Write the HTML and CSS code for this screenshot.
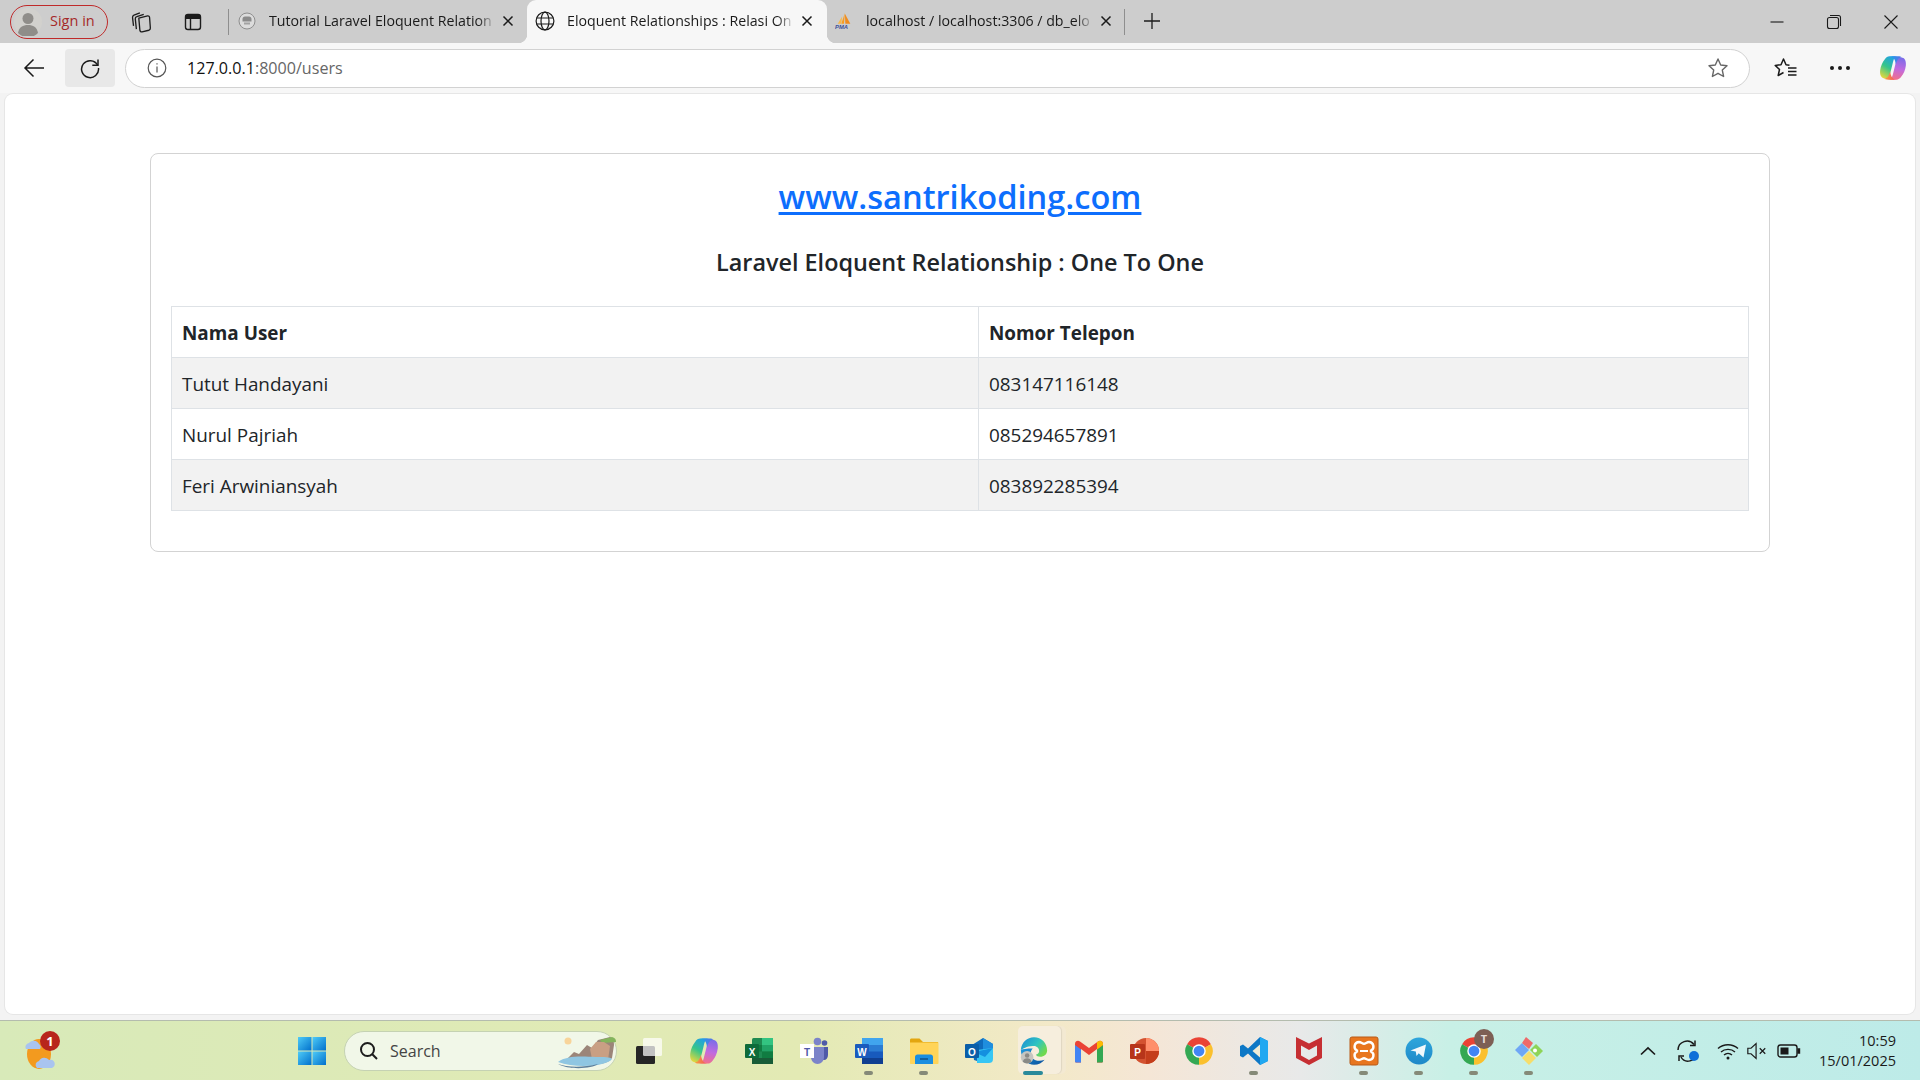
FILE: index.html
```html
<!DOCTYPE html>
<html lang="en">
<head>
<meta charset="utf-8">
<title>Eloquent Relationships</title>
<link rel="stylesheet" href="styles.css">
</head>
<body>
<svg class="sprite" aria-hidden="true">
  <defs>
    <linearGradient id="cpA" x1="0.7" y1="0" x2="0.2" y2="1"><stop offset="0" stop-color="#1f9fe8"/><stop offset=".5" stop-color="#35c58a"/><stop offset="1" stop-color="#e8d83c"/></linearGradient>
    <linearGradient id="cpB" x1="0.6" y1="0" x2="0.4" y2="1"><stop offset="0" stop-color="#7c6ce8"/><stop offset=".5" stop-color="#c06ae0"/><stop offset="1" stop-color="#f2708a"/></linearGradient>
    <linearGradient id="cpC" x1="0" y1="0" x2="1" y2="0"><stop offset="0" stop-color="#1f9fe8"/><stop offset="1" stop-color="#5a70e8"/></linearGradient>
    <linearGradient id="cpD" x1="0" y1="0" x2="1" y2="0"><stop offset="0" stop-color="#f7a53c"/><stop offset="1" stop-color="#ef4f5c"/></linearGradient>
    <linearGradient id="edA" x1="0" y1="0" x2="1" y2=".6"><stop offset="0" stop-color="#1b8ad6"/><stop offset=".6" stop-color="#2fc5c0"/><stop offset="1" stop-color="#6fd94f"/></linearGradient>
    <linearGradient id="edB" x1="0" y1="0" x2="1" y2="1"><stop offset="0" stop-color="#1e9be0"/><stop offset="1" stop-color="#0c4f9c"/></linearGradient>
    <linearGradient id="tgA" x1="0" y1="0" x2="0" y2="1"><stop offset="0" stop-color="#2ea6dc"/><stop offset="1" stop-color="#1e88c8"/></linearGradient>
    <linearGradient id="wnA" x1="0" y1="0" x2="1" y2="1"><stop offset="0" stop-color="#4fcbf7"/><stop offset="1" stop-color="#0070cc"/></linearGradient>
    <symbol id="copilot" viewBox="0 0 24 24">
      <path d="M9 2h7c-3 0-3.500 3-4.500 7L10 15c-1 4-2 6-5 6-3 0-4.500-3-4-7 .5-4 2-7 4-9.500C6 3 7.500 2 9 2z" fill="url(#cpA)"/>
      <path d="M15 22H8c3 0 3.500-3 4.500-7L14 9c1-4 2-6 5-6 3 0 4.500 3 4 7-.5 4-2 7-4 9.500-1 1.500-2.500 2.500-4 2.500z" fill="url(#cpB)"/>
      <path d="M9 2h7c2 0 3 .4 3.500 1-2.500 0-4 2-5 6-.5-3-1.500-7-5.500-7z" fill="url(#cpC)"/>
      <path d="M15 22H8c-2 0-3-.4-3.500-1 2.500 0 4-2 5-6 .5 3 1.500 7 5.500 7z" fill="url(#cpD)"/>
    </symbol>
    <symbol id="chrome" viewBox="0 0 24 24">
      <path d="M12 12L2.470 6.500A11 11 0 0 1 21.530 6.500Z" fill="#ea4335"/>
      <path d="M12 12L21.530 6.500A11 11 0 0 1 12 23Z" fill="#fbc02d"/>
      <path d="M12 12L12 23A11 11 0 0 1 2.470 6.500Z" fill="#34a853"/>
      <circle cx="12" cy="12" r="5.400" fill="#fff"/><circle cx="12" cy="12" r="4.300" fill="#4285f4"/>
    </symbol>
  </defs>
</svg>

<div class="strip">
  <div class="signin">
    <svg class="avatar" viewBox="0 0 28 28"><circle cx="14" cy="14" r="14" fill="#d2d1cd"/><circle cx="14" cy="10.500" r="5.500" fill="#8f8d89"/><path d="M4 25c1-6 5-8 10-8s9 2 10 8a14 14 0 0 1-20 0z" fill="#8f8d89"/></svg>
    <span>Sign in</span>
  </div>
  <div class="strip-btn">
    <svg class="ico22" viewBox="0 0 20 20" fill="none" stroke="#1c1c1c" stroke-width="1.200" stroke-linejoin="round"><path d="M8 6.500L16 4.500c1-.2 1.700.4 1.800 1.400L18.500 15.500c.1 1-.4 1.700-1.400 2L11 19c-1 .2-1.800-.3-2-1.300z"/><path d="M5.800 16.500L4.800 7.200c-.1-1 .4-1.800 1.400-2.100L12.500 3"/><path d="M3.200 13.500L2.300 6c-.1-1 .4-1.800 1.300-2.200L9 1.800"/></svg>
  </div>
  <div class="strip-btn">
    <svg class="ico20" viewBox="0 0 20 20"><rect x="2.500" y="2.500" width="15" height="15" rx="2.500" fill="none" stroke="#1c1c1c" stroke-width="1.400"/><path d="M3 3h14v4H3z" fill="#1c1c1c"/><path d="M7.500 7v10" stroke="#1c1c1c" stroke-width="1.400"/></svg>
  </div>
  <div class="divider first"></div>
  <div class="tab tab-one">
    <svg class="favicon" viewBox="0 0 18 18"><circle cx="9" cy="9" r="8" fill="#dcdcdc" stroke="#8e8e8e"/><path d="M4.500 7c0-1.500 1-2.500 2.500-2.500h4c1.500 0 2.500 1 2.500 2.500v2.500h-9z" fill="#8b8b8b"/><path d="M6 10.500h6v2H6z" fill="#a2a2a2"/></svg>
    <span class="tab-title">Tutorial Laravel Eloquent Relation</span>
    <svg class="close" viewBox="0 0 16 16"><path d="M3.500 3.500l9 9M12.500 3.500l-9 9" stroke="#1a1a1a" stroke-width="1.500"/></svg>
  </div>
  <div class="tab tab-active">
    <svg class="globe" viewBox="0 0 20 20" fill="none" stroke="#1a1a1a" stroke-width="1.200"><circle cx="10" cy="10" r="8.900"/><ellipse cx="10" cy="10" rx="4" ry="8.900"/><path d="M1.800 7h16.400M1.800 13h16.400"/></svg>
    <span class="tab-title">Eloquent Relationships : Relasi On</span>
    <svg class="close" viewBox="0 0 16 16"><path d="M3.500 3.500l9 9M12.500 3.500l-9 9" stroke="#1a1a1a" stroke-width="1.500"/></svg>
  </div>
  <div class="tab tab-three">
    <svg class="favicon" viewBox="0 0 20 20"><path d="M7 13L11 1l-1 12z" fill="#f89c20"/><path d="M3 13l5-8-1 8z" fill="#f7b84b"/><path d="M11.500 13L11 2l6 11z" fill="#f08c1e"/><text class="pma" x="0" y="19">PMA</text></svg>
    <span class="tab-title">localhost / localhost:3306 / db_elo</span>
    <svg class="close" viewBox="0 0 16 16"><path d="M3.500 3.500l9 9M12.500 3.500l-9 9" stroke="#1a1a1a" stroke-width="1.500"/></svg>
  </div>
  <div class="divider"></div>
  <div class="new-tab">
    <svg class="ico20" viewBox="0 0 20 20"><path d="M10 2v16M2 10h16" stroke="#1c1c1c" stroke-width="1.300"/></svg>
  </div>
  <div class="win-controls">
    <svg class="win-btn" viewBox="0 0 16 16"><path d="M1.500 8h13" stroke="#1a1a1a" stroke-width="1.100"/></svg>
    <svg class="win-btn" viewBox="0 0 16 16" fill="none" stroke="#1a1a1a" stroke-width="1.100"><rect x="1.500" y="3.500" width="11" height="11" rx="2"/><path d="M4 1.500h8.500c1 0 2 1 2 2V12"/></svg>
    <svg class="win-btn" viewBox="0 0 16 16"><path d="M1.500 1.500l13 13M14.500 1.500l-13 13" stroke="#1a1a1a" stroke-width="1.100"/></svg>
  </div>
</div>

<div class="toolbar">
  <div class="tool back">
    <svg class="ico22" viewBox="0 0 22 22" fill="none" stroke="#1a1a1a" stroke-width="1.500"><path d="M21 11H2M10.500 2.500L2 11l8.500 8.500"/></svg>
  </div>
  <div class="tool reload">
    <svg class="ico22" viewBox="0 0 22 22" fill="none" stroke="#1a1a1a" stroke-width="1.500"><path d="M18.500 8A8.500 8.500 0 1 0 19.500 11"/><path d="M19 2.500V8.200h-5.700"/></svg>
  </div>
  <div class="address">
    <svg class="info" viewBox="0 0 20 20" fill="none" stroke="#555" stroke-width="1.200"><circle cx="10" cy="10" r="8.800"/><path d="M10 8.500v6"/><path d="M10 5.200v1.400"/></svg>
    <span class="url"><span class="url-host">127.0.0.1</span>:8000/users</span>
    <svg class="addr-star" viewBox="0 0 22 22" fill="none" stroke="#666" stroke-width="1.400"><path d="M11 2l2.700 6 6.300.7-4.700 4.400 1.300 6.400-5.600-3.200-5.600 3.200 1.300-6.400L2 8.700 8.300 8z" stroke-linejoin="round"/></svg>
  </div>
  <div class="tool favs">
    <svg class="ico24" viewBox="0 0 24 24" fill="none" stroke="#1a1a1a" stroke-width="1.500" stroke-linejoin="round"><path d="M15.500 9.200L12 8.700 9.500 3 7 8.700l-5.800.7 4.300 4.100-1.300 6 5.300-3"/><path d="M14 12h8.500M14 15.500h8.500M14 19h8.500" stroke-width="1.400"/></svg>
  </div>
  <div class="tool dots">
    <span class="dot"></span><span class="dot"></span><span class="dot"></span>
  </div>
  <div class="tool cp">
    <svg class="ico28" viewBox="0 0 24 24"><use href="#copilot"/></svg>
  </div>
</div>

<div class="viewport">
  <main class="page">
    <section class="card">
      <h3 class="site"><a href="#">www.santrikoding.com</a></h3>
      <h5 class="subtitle">Laravel Eloquent Relationship : One To One</h5>
      <table class="users">
        <colgroup><col class="col-a"><col class="col-b"></colgroup>
        <thead><tr><th>Nama User</th><th>Nomor Telepon</th></tr></thead>
        <tbody>
          <tr><td>Tutut Handayani</td><td>083147116148</td></tr>
          <tr><td>Nurul Pajriah</td><td>085294657891</td></tr>
          <tr><td>Feri Arwiniansyah</td><td>083892285394</td></tr>
        </tbody>
      </table>
    </section>
  </main>
</div>

<footer class="taskbar">
  <div class="weather">
    <svg class="weather-ico" viewBox="0 0 36 36">
      <ellipse cx="16" cy="19" rx="12" ry="15" fill="#f39a1f"/>
      <path d="M3 14a4 4 0 0 1 3-6 6 6 0 0 1 10 1 3.500 3.500 0 0 1 1 5z" fill="#a9c4ef"/>
      <path d="M14 33a4 4 0 0 1 2-7 6 6 0 0 1 10-1 4 4 0 0 1 3 8z" fill="#a9c4ef"/>
    </svg>
    <span class="badge-red">1</span>
  </div>
  <div class="start">
    <svg class="ico30" viewBox="0 0 30 30"><rect x="1" y="1" width="13.500" height="13.500" fill="url(#wnA)"/><rect x="15.500" y="1" width="13.500" height="13.500" fill="url(#wnA)"/><rect x="1" y="15.500" width="13.500" height="13.500" fill="url(#wnA)"/><rect x="15.500" y="15.500" width="13.500" height="13.500" fill="url(#wnA)"/></svg>
  </div>
  <div class="search">
    <svg class="search-ico" viewBox="0 0 20 20" fill="none" stroke="#1c1c1c" stroke-width="2"><circle cx="8.500" cy="8.500" r="6.500"/><path d="M13.300 13.300L18 18"/></svg>
    <span class="search-text">Search</span>
    <svg class="scene" viewBox="0 0 60 36">
      <circle cx="12" cy="8" r="3.500" fill="#f8d49a"/>
      <path d="M10 27l8-8 5 2 8-9 5 3 6-8 12-3c3 1 4 3 4 8l-2 13c-4 8-30 9-41 2z" fill="#9b8579"/>
      <path d="M44 7l12-3c3 1 4 2 4 5l-14 1z" fill="#83b45c"/>
      <path d="M34 16l6-7 8 0 6 4-2 14-16-1z" fill="#c99f84"/>
      <path d="M2 29c8-6 20-6 38-5 8 0 14 0 16 2-4 7-36 10-54 3z" fill="#8fc6e2"/>
      <path d="M2 31c8 3 24 4 40 0-6 5-30 6-40 0z" fill="#5c7f9c"/>
    </svg>
  </div>
  <nav class="apps">
    <div class="app">
      <svg class="ico30" viewBox="0 0 30 30"><rect x="2" y="10" width="19" height="18" rx="1.500" fill="#262626"/><rect x="9" y="2" width="19" height="18" rx="1.500" fill="#fff" fill-opacity=".72"/></svg>
    </div>
    <div class="app">
      <svg class="ico30" viewBox="0 0 24 24"><use href="#copilot"/></svg>
    </div>
    <div class="app">
      <svg class="ico30" viewBox="0 0 30 30"><rect x="8" y="2" width="21" height="26" rx="1.500" fill="#1f8a52"/><rect x="18" y="2" width="11" height="7" fill="#33c481"/><rect x="18" y="9" width="11" height="6.500" fill="#21a366"/><rect x="18" y="15.500" width="11" height="6.500" fill="#107c41"/><rect x="8" y="9" width="10" height="6.500" fill="#107c41"/><rect x="8" y="22" width="21" height="6" fill="#185c37"/><rect x="1" y="8" width="14" height="14" rx="1" fill="#0e6b3a"/><text class="logo-letter" x="8" y="19.500">X</text></svg>
    </div>
    <div class="app">
      <svg class="ico30" viewBox="0 0 30 30"><circle cx="18.500" cy="5.500" r="3.800" fill="#7b83c9"/><circle cx="25.500" cy="7" r="2.800" fill="#4f5aa8"/><path d="M21 11h8v8c0 3-2 5-4 5-2.500 0-4-2-4-5z" fill="#4f5aa8"/><path d="M12 11h13v10c0 4-3 7-6.500 7S12 25 12 21z" fill="#7b83c9"/><rect x="1" y="8" width="14" height="14" fill="#fff"/><text class="logo-letter teams" x="8" y="19.500">T</text></svg>
    </div>
    <div class="app dotted">
      <svg class="ico30" viewBox="0 0 30 30"><rect x="8" y="2" width="21" height="26" rx="1.500" fill="#2b7cd3"/><rect x="8" y="2" width="21" height="7" fill="#41a5ee"/><rect x="8" y="9" width="21" height="6.500" fill="#2b7cd3"/><rect x="8" y="15.500" width="21" height="6.500" fill="#185abd"/><rect x="8" y="22" width="21" height="6" fill="#103f91"/><rect x="1" y="8" width="14" height="14" rx="1" fill="#1a5bbd"/><text class="logo-letter" x="8" y="19.500">W</text></svg>
    </div>
    <div class="app dotted">
      <svg class="ico30" viewBox="0 0 30 30"><path d="M1 4c0-1 .7-1.500 1.500-1.500h8L14 6h15v3H1z" fill="#e3a60f"/><path d="M1 6.500h13l1.500 0H29.500V27c0 .6-.5 1-1 1H2c-.6 0-1-.4-1-1z" fill="#ffd458"/><path d="M6 21c0-1.500 1-2.500 2.500-2.500h13c1.500 0 2.500 1 2.500 2.500v7H6z" fill="#1b8ee0"/><path d="M11 23h8" stroke="#10508a" stroke-width="1.500"/></svg>
    </div>
    <div class="app">
      <svg class="ico30" viewBox="0 0 30 30"><path d="M8 9l11-7 10 6v13L19 27l-9-3z" fill="#0f6cbd"/><path d="M19 2l10 6v6H19z" fill="#1f8ede"/><path d="M13 14l16-2v11c0 3-2 4-4 4H13z" fill="#37c6f4"/><path d="M10 16l19-4-8 9z" fill="#1490df"/><rect x="1" y="8" width="14" height="14" rx="1" fill="#0a5ea8"/><text class="logo-letter" x="8" y="19.500">O</text></svg>
    </div>
    <div class="app active">
      <span class="stack"></span>
      <span class="stack-front"></span>
      <svg class="ico30 over" viewBox="0 0 24 24">
        <path d="M1.500 11C2 5 6.500 1 12 1c6 0 10.500 4.500 10.500 10.500 0 3-2.500 5-5.500 5-1.800 0-3-.5-3.500-1.500 2-.5 3-2 2.500-4-.7-2.500-3-3-5-3-5 0-8 2.500-9.500 3z" fill="url(#edA)"/>
        <path d="M1.500 11c0 7 5.500 12 10.500 12 3.500 0 6.500-1.500 8.500-4-3.500 1.500-7.500 1-9.500-1-2.500-2.500-2-6 0-8-5 0-8 .5-9.500 1z" fill="url(#edB)"/>
        <circle cx="6.500" cy="17" r="5" fill="#c5c5c0"/><circle cx="6.500" cy="15.500" r="1.800" fill="#8a8a86"/><path d="M3 20.500c.5-2 2-2.700 3.500-2.700s3 .7 3.500 2.700a5 5 0 0 1-7 0z" fill="#8a8a86"/>
      </svg>
    </div>
    <div class="app">
      <svg class="ico30" viewBox="0 0 30 30"><path d="M1 8c0-3 3-4 5-2.500L15 12l9-6.500c2-1.500 5-.5 5 2.500v17c0 1-.6 1.500-1.500 1.500H23V13l-8 6-8-6v13.500H2.500C1.600 26.500 1 26 1 25z" fill="#ea4335"/><path d="M1 9l6 4.500v13H2.500C1.600 26.500 1 26 1 25z" fill="#4285f4"/><path d="M29 9l-6 4.500v13h4.500c.9 0 1.500-.5 1.500-1.500z" fill="#34a853"/><path d="M24 5.500c2-1.500 5-.5 5 2.500v1l-6 4.500V6.200z" fill="#fbbc04"/></svg>
    </div>
    <div class="app">
      <svg class="ico30" viewBox="0 0 30 30"><circle cx="17" cy="15" r="13" fill="#d35230"/><path d="M17 2a13 13 0 0 1 13 13H17z" fill="#ff8f6b"/><path d="M17 15h13a13 13 0 0 1-13 13z" fill="#c43e1c"/><rect x="1" y="8" width="15" height="15" rx="1" fill="#b7351a"/><text class="logo-letter" x="8.500" y="20">P</text></svg>
    </div>
    <div class="app">
      <svg class="ico30" viewBox="0 0 24 24"><use href="#chrome"/></svg>
    </div>
    <div class="app dotted">
      <svg class="ico30" viewBox="0 0 30 30"><path d="M21 1l8 4v20l-8 4L9 17.500 4 21.500 1 20V10l3-1.500 5 4z" fill="#0e78c6"/><path d="M21 1l8 4v20l-8 4z" fill="#21a8f1"/><path d="M21 8.500L13.500 15l7.500 6.500z" fill="#f0ecd6"/></svg>
    </div>
    <div class="app">
      <svg class="ico30" viewBox="0 0 30 30"><path fill-rule="evenodd" d="M2 1l13 6.500L28 1v21L15 29 2 22zM7 9.500v10L15 24l8-4.500v-10L15 14z" fill="#c62f33"/></svg>
    </div>
    <div class="app dotted">
      <svg class="ico30" viewBox="0 0 30 30"><rect x="1" y="1" width="28" height="28" rx="2" fill="#e8761f" stroke="#b85a18"/><path d="M10 6a4.500 4.500 0 0 0-2 8.500V15.500a4.500 4.500 0 0 0 2 8.500c2 0 3.500-1.800 5-1.800s3 1.800 5 1.800a4.500 4.500 0 0 0 2-8.500V14.500A4.500 4.500 0 0 0 20 6c-2 0-3.500 1.800-5 1.800S12 6 10 6z" fill="none" stroke="#fff" stroke-width="2.400"/><path d="M11 15h8" stroke="#fff" stroke-width="2"/></svg>
    </div>
    <div class="app dotted">
      <svg class="ico30" viewBox="0 0 30 30"><circle cx="15" cy="15" r="13.500" fill="url(#tgA)"/><path d="M6.500 14.500L22 8.500l-2.500 13-4.800-4.200-2.200 2.700-.7-4.500z" fill="#f2f8fc"/></svg>
    </div>
    <div class="app dotted">
      <svg class="ico30" viewBox="0 0 24 24"><use href="#chrome"/></svg>
      <span class="badge-t">T</span>
    </div>
    <div class="app dotted">
      <svg class="ico30" viewBox="0 0 30 30"><path d="M1 14l7-7 7 7-7 7z" fill="#6fa7f5"/><path d="M8 7l4-6 7 6-4 6z" fill="#ee6a6a"/><path d="M16 14l6-6 7 7-6 6z" fill="#8ed458"/><path d="M8 22l7-7 7 7-7 7z" fill="#f6dd6a"/><circle cx="21" cy="14.500" r="2" fill="#fff"/></svg>
    </div>
  </nav>
  <div class="tray">
    <svg class="tray-ico chev" viewBox="0 0 20 20" fill="none" stroke="#1a1a1a" stroke-width="1.700"><path d="M3 13.500L10 7l7 6.500"/></svg>
    <svg class="tray-ico sync" viewBox="0 0 24 24" fill="none" stroke="#1a1a1a" stroke-width="1.500"><path d="M2 11A9 9 0 0 1 18 5.500"/><path d="M19 1.500V6.500H14"/><path d="M20 14a8 8 0 0 1-15 4"/><path d="M3 22v-5h5"/><circle cx="18" cy="17" r="5" fill="#0f6fd8" stroke="none"/></svg>
    <svg class="tray-ico wifi" viewBox="0 0 24 24" fill="none" stroke="#1a1a1a" stroke-width="1.400"><path d="M2 9.500c5.500-5 14.500-5 20 0M5 13c3.800-3.500 10.200-3.500 14 0M8 16c2.300-2 5.700-2 8 0"/><circle cx="12" cy="19" r="1.500" fill="#1a1a1a" stroke="none"/></svg>
    <svg class="tray-ico vol" viewBox="0 0 24 24" fill="none" stroke="#1a1a1a" stroke-width="1.300"><path d="M2 9h3.500L11 4v16l-5.500-5H2z"/><path d="M15 9l6 6M21 9l-6 6"/></svg>
    <svg class="tray-ico batt" viewBox="0 0 24 24" fill="none" stroke="#1a1a1a" stroke-width="1.400"><rect x="1" y="6" width="19" height="12" rx="2.500"/><rect x="3.500" y="8.500" width="8" height="7" fill="#1a1a1a" stroke="none"/><path d="M21 10v4h1.500v-4z" fill="#1a1a1a"/></svg>
    <div class="clock"><span>10:59</span><span>15/01/2025</span></div>
  </div>
</footer>
</body>
</html>
```

FILE: styles.css
```css
* { box-sizing: border-box; }
html, body { margin: 0; height: 100%; }
body {
  display: flex;
  flex-direction: column;
  height: 1080px;
  overflow: hidden;
  background: #f7f7f7;
  font-family: "Open Sans", "Noto Sans", "Liberation Sans", sans-serif;
  color: #1a1a1a;
}
.sprite { position: absolute; width: 0; height: 0; }
svg { display: block; flex: none; }
.ico20 { width: 20px; height: 20px; }
.ico22 { width: 22px; height: 22px; }
.ico24 { width: 24px; height: 24px; }
.ico28 { width: 28px; height: 28px; }
.ico30 { width: 30px; height: 30px; }

/* tab strip */
.strip {
  display: flex;
  align-items: center;
  height: 43px;
  flex: none;
  padding-left: 10px;
  background: #cdcdcd;
}
.signin {
  display: flex;
  align-items: center;
  gap: 8px;
  width: 98px;
  height: 34px;
  padding-left: 3px;
  border: 1.5px solid #bf2a2a;
  border-radius: 17px;
  font-size: 14.5px;
  color: #a52a2a;
}
.signin span { padding-bottom: 2px; }
.avatar { width: 28px; height: 28px; }
.strip-btn { display: flex; justify-content: center; width: 52px; }
.signin + .strip-btn { margin-left: 7px; }
.divider { width: 1px; height: 26px; background: #8e8e8e; flex: none; }
.divider.first { margin-left: 9px; margin-right: 3px; }
.tab {
  position: relative;
  display: flex;
  align-items: center;
  align-self: stretch;
  padding-bottom: 1px;
  font-size: 14.2px;
  white-space: nowrap;
}
.tab-one { width: 295px; padding-left: 6px; padding-right: 11px; }
.tab-active { width: 300px; padding-left: 8px; padding-right: 12px; background: #f7f7f7; border-radius: 9px 9px 0 0; }
.tab-three { width: 297px; padding-left: 8px; padding-right: 10px; }
.tab-active::before, .tab-active::after {
  content: "";
  position: absolute;
  bottom: 0;
  width: 9px;
  height: 9px;
}
.tab-active::before { left: -9px; background: radial-gradient(circle at 0 0, transparent 9px, #f7f7f7 9.5px); }
.tab-active::after { right: -9px; background: radial-gradient(circle at 100% 0, transparent 9px, #f7f7f7 9.5px); }
.favicon { width: 18px; height: 18px; }
.globe { width: 20px; height: 20px; }
.tab-title {
  flex: 1;
  min-width: 0;
  margin: 0 4px 1px 13px;
  overflow: hidden;
  -webkit-mask-image: linear-gradient(90deg, #000 92%, transparent);
  mask-image: linear-gradient(90deg, #000 92%, transparent);
}
.tab-active .tab-title { margin-left: 12px; }
.close { width: 16px; height: 16px; }
.pma { font: italic 700 6.500px "Liberation Sans", sans-serif; fill: #3a4f9a; }
.new-tab { margin-left: 17px; margin-bottom: 1px; }
.win-controls {
  display: flex;
  gap: 41px;
  margin-left: auto;
  margin-right: 21px;
}
.win-btn { width: 16px; height: 16px; }

/* toolbar */
.toolbar {
  display: flex;
  align-items: center;
  flex: none;
  height: 50px;
  background: #f7f7f7;
}
.tool { display: flex; align-items: center; justify-content: center; }
.back { width: 50px; margin-left: 9px; }
.reload { width: 50px; height: 38px; margin-left: 6px; background: #e8e8e8; border-radius: 4px; }
.address {
  display: flex;
  align-items: center;
  flex: none;
  width: 1625px;
  height: 39px;
  margin-left: 10px;
  padding: 0 20px 0 21px;
  background: #fff;
  border: 1.5px solid #d2d2d2;
  border-radius: 20px;
}
.info { width: 20px; height: 20px; }
.url { margin-left: 20px; font-size: 16.1px; color: #666; }
.url-host { color: #111; }
.addr-star { width: 22px; height: 22px; margin-left: auto; }
.favs { width: 24px; margin-left: 24px; }
.dots { gap: 4px; width: 24px; margin-left: 30px; }
.dot { width: 4px; height: 4px; border-radius: 50%; background: #1a1a1a; }
.cp { width: 28px; margin-left: 27px; }

/* page */
.viewport {
  flex: 1;
  min-height: 0;
  padding: 1px 5px 6px;
  background: #f3f3f3;
}
.page {
  height: 100%;
  padding: 59px 145px 0;
  background: #fff;
  border-radius: 8px;
  box-shadow: 0 0 0 1px #e6e6e6;
}
.card {
  padding: 20px 20px 40px;
  background: #fff;
  border: 1px solid #d3d3d3;
  border-radius: 8px;
  color: #212529;
}
.site {
  margin: 2px 0 1px;
  font-size: 32.6px;
  line-height: 42px;
  font-weight: 600;
  text-align: center;
}
.site a { color: #0d6efd; text-decoration: underline; text-underline-offset: 3px; }
.subtitle {
  margin: 29px 0 29px;
  font-size: 23.4px;
  line-height: 30px;
  font-weight: 600;
  text-align: center;
}
.users { width: 100%; border-collapse: collapse; table-layout: fixed; font-size: 18.9px; }
.col-a { width: 807px; }
.users th, .users td {
  height: 51px;
  padding: 11px 10px 9px;
  border: 1px solid #dee2e6;
  line-height: 30px;
  text-align: left;
}
.users th { font-weight: 700; }
.users tbody tr:nth-child(odd) { background: #f2f2f2; }

/* taskbar */
.taskbar {
  display: flex;
  align-items: center;
  flex: none;
  height: 60px;
  border-top: 1px solid #b4bcae;
  background: linear-gradient(90deg, #d8eab9 0, #e3eab4 800px, #f3e9c8 1050px, #f5e6d6 1150px, #e8e9e9 1300px, #c8f0e6 1450px, #bdebe8 1920px);
}
.weather { position: relative; width: 40px; height: 40px; margin-left: 23px; }
.weather-ico { width: 36px; height: 36px; margin-top: 4px; }
.badge-red {
  position: absolute;
  top: 0;
  left: 17px;
  width: 20px;
  height: 20px;
  border-radius: 50%;
  background: #b8251c;
  color: #fff;
  font-size: 13px;
  font-weight: 700;
  line-height: 20px;
  text-align: center;
}
.start { display: flex; justify-content: center; width: 56px; margin-left: 221px; }
.search {
  display: flex;
  align-items: center;
  width: 273px;
  height: 40px;
  margin-left: 4px;
  padding-left: 14px;
  background: #f1f7e8;
  border: 1px solid #c5d2b3;
  border-radius: 20px;
}
.search-ico { width: 20px; height: 20px; }
.search-text { margin-left: 11px; font-size: 16px; color: #444; }
.scene { width: 60px; height: 36px; margin-left: auto; }
.apps { display: flex; margin-left: 4px; }
.app {
  position: relative;
  display: flex;
  align-items: center;
  justify-content: center;
  width: 55px;
  height: 59px;
}
.dotted::after {
  content: "";
  position: absolute;
  left: 23px;
  bottom: 5px;
  width: 9px;
  height: 4px;
  border-radius: 2px;
  background: #858a78;
}
.stack {
  position: absolute;
  top: 5px;
  left: 13px;
  width: 47px;
  height: 48px;
  border-radius: 5px;
  background: #f3e9d2;
}
.stack-front {
  position: absolute;
  top: 5px;
  left: 12px;
  width: 43px;
  height: 48px;
  border-radius: 5px;
  background: #f6eedd;
  box-shadow: 1px 0 1px rgba(0, 0, 0, .08);
}
.over { position: relative; }
.active::after {
  content: "";
  position: absolute;
  left: 17px;
  bottom: 5px;
  width: 20px;
  height: 4px;
  border-radius: 2px;
  background: #2a8a9a;
}
.logo-letter {
  font: 700 10px "Liberation Sans", sans-serif;
  fill: #fff;
  text-anchor: middle;
}
.logo-letter.teams { fill: #4f5aa8; }
.badge-t {
  position: absolute;
  top: 8px;
  left: 28px;
  width: 20px;
  height: 20px;
  border-radius: 50%;
  background: #7d5f55;
  color: #e6dcd8;
  font-size: 11px;
  font-weight: 700;
  line-height: 20px;
  text-align: center;
}
.tray { display: flex; align-items: center; flex: 1; }
.tray-ico { width: 24px; height: 24px; }
.chev { width: 20px; height: 20px; margin-left: 82px; }
.sync { margin-left: 18px; }
.wifi { margin-left: 16px; }
.vol { width: 22px; height: 22px; margin-left: 6px; }
.batt { margin-left: 9px; }
.clock {
  display: flex;
  flex-direction: column;
  align-items: flex-end;
  flex: 1;
  padding-right: 24px;
  font-size: 14.5px;
  line-height: 20px;
}
```
